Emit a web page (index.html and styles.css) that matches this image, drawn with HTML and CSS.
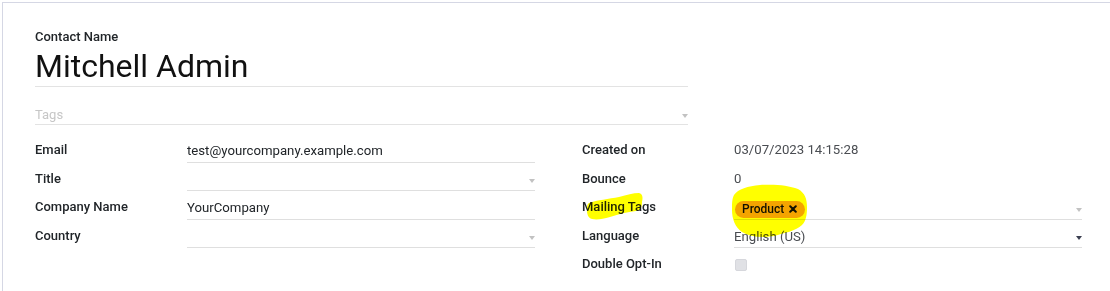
FILE: index.html
```html
<!DOCTYPE html>
<html>
<head>
<meta charset="utf-8">
<link rel="stylesheet" href="styles.css">
</head>
<body>
<div class="sheet">
  <div class="title">
    <div class="name-label">Contact Name</div>
    <div class="name-field">Mitchell Admin</div>
  </div>
  <div class="tags-field">
    <span class="placeholder">Tags</span>
    <span class="caret"></span>
  </div>
  <div class="groups">
    <div class="group">
      <div class="lbl">Email</div>
      <div class="val input">test@yourcompany.example.com</div>
      <div class="lbl">Title</div>
      <div class="val input"><span class="caret"></span></div>
      <div class="lbl">Company Name</div>
      <div class="val input">YourCompany</div>
      <div class="lbl">Country</div>
      <div class="val input"><span class="caret"></span></div>
    </div>
    <div class="group">
      <div class="lbl">Created on</div>
      <div class="val ro">03/07/2023 14:15:28</div>
      <div class="lbl">Bounce</div>
      <div class="val ro">0</div>
      <div class="lbl">Mailing Tags</div>
      <div class="val input tagcell">
        <span class="badge">Product
          <svg class="x" width="8" height="8" viewBox="0 0 8 8"><path d="M1.2 1.2 L6.8 6.8 M6.8 1.2 L1.2 6.8" stroke="#111" stroke-width="2" stroke-linecap="round"/></svg>
        </span>
        <span class="caret"></span>
      </div>
      <div class="lbl">Language</div>
      <div class="val input soft">English (US)<span class="caret dark"></span></div>
      <div class="lbl">Double Opt-In</div>
      <div class="val"><span class="checkbox"></span></div>
    </div>
  </div>
  <svg class="hl hl-label" width="70" height="34" viewBox="0 0 70 34">
    <path d="M6 13 C14 10 26 9 36 7 C44 5 50 3 56 3 C60 4 60 8 59 12 C59 17 58 20 53 21 C44 22 36 24 27 27 C20 29 14 30 9 29 C5 28 4 24 4 20 C4 17 4 14 6 13 Z" fill="#ffff00"/>
  </svg>
  <svg class="hl hl-badge" width="84" height="56" viewBox="0 0 84 56">
    <path d="M6 12 C10 6 20 3 32 2 C46 1 60 2 70 6 C77 10 79 16 79 24 C79 32 78 38 74 42 C68 48 56 50 46 53 C34 55 22 54 14 49 C7 44 4 36 4 27 C4 20 4 16 6 12 Z" fill="#ffff00"/>
  </svg>
</div>
</body>
</html>
```

FILE: styles.css
```css
html, body {
  margin: 0;
  padding: 0;
  background: #ffffff;
}

body {
  font-family: Roboto, "Noto Sans", "Liberation Sans", sans-serif;
  font-size: 13px;
  color: #212529;
}

.sheet {
  position: relative;
  margin: 2px 0 0 2px;
  border-top: 1px solid #d5d7e4;
  border-left: 1px solid #d5d7e4;
  padding: 23.5px 0 0 32px;
  min-height: 289px;
  box-sizing: border-box;
}

.name-label {
  font-weight: 500;
  line-height: 20px;
}

.name-field {
  width: 653px;
  font-size: 32px;
  line-height: 39px;
  font-weight: 400;
  color: #111;
  border-bottom: 1px solid #e3e3e3;
}

.tags-field {
  width: 653px;
  margin-top: 17.5px;
  padding-top: 1.5px;
  height: 18.5px;
  line-height: 20px;
  border-bottom: 1px solid #e3e3e3;
  display: flex;
  align-items: center;
}

.placeholder {
  color: #c6c6c6;
}

.caret {
  margin-left: auto;
  margin-top: 3px;
  width: 0;
  height: 0;
  border-left: 3.5px solid transparent;
  border-right: 3.5px solid transparent;
  border-top: 4px solid #c2c2c2;
}

.caret.dark {
  border-top-color: #3b3f50;
}

.groups {
  margin-top: 13.8px;
  display: flex;
  gap: 47px;
}

.group {
  display: grid;
  grid-template-columns: 152px 348px;
  grid-auto-rows: 24px;
  row-gap: 4.5px;
}

.lbl {
  font-weight: 500;
  line-height: 20px;
  padding-top: 1.5px;
  color: #212529;
}

.val {
  line-height: 20px;
  display: flex;
  align-items: center;
  height: 20px;
  padding-top: 1.5px;
  font-size: 13.2px;
}

.val.input {
  height: 21.5px;
  padding-bottom: 0;
  border-bottom: 1px solid #dfdfdf;
  box-sizing: border-box;
  height: 24px;
}

.val.ro {
  color: #4a4d52;
}

.val.soft {
  color: #4a4d52;
}

.badge {
  display: inline-flex;
  align-items: center;
  height: 17px;
  padding: 0 8px 0 7px;
  margin-left: 1px;
  margin-top: 2px;
  border-radius: 9px;
  background: #f4a460;
  color: #111;
  font-size: 12px;
  font-weight: 500;
  line-height: 17px;
}

.badge .x {
  margin-left: 5px;
  display: block;
}

.checkbox {
  display: block;
  width: 12px;
  height: 12px;
  margin-left: 1px;
  margin-top: 1px;
  background: #e0e1e5;
  border: 1px solid #d6d7dc;
  border-radius: 2px;
  box-sizing: border-box;
}

.hl {
  position: absolute;
  mix-blend-mode: multiply;
  pointer-events: none;
}

.hl-label {
  left: 580px;
  top: 187px;
}

.hl-badge {
  left: 725px;
  top: 180px;
}
```
